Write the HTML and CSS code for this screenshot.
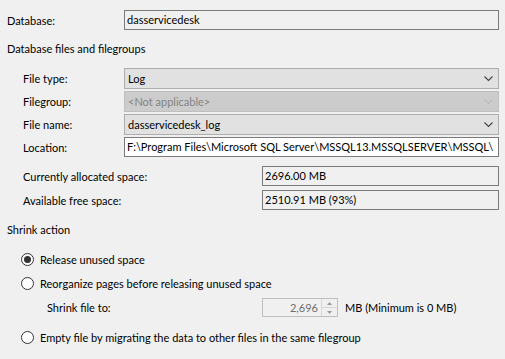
FILE: index.html
```html
<!DOCTYPE html>
<html lang="en">
<head>
    <meta charset="UTF-8">
    <title>Shrink File</title>
    <link rel="stylesheet" href="styles.css">
</head>
<body>
    <div class="page">
        <div class="row row-db">
            <span class="label">Database:</span>
            <div class="textbox readonly">dasservicedesk</div>
        </div>

        <div class="heading heading-files">Database files and filegroups</div>

        <div class="indent">
            <div class="row row-combo">
                <span class="label">File type:</span>
                <div class="combo">
                    <span class="combo-text">Log</span>
                    <svg class="chev" width="9" height="6" viewBox="0 0 9 6"><polyline points="0.5,0.5 4.5,4.5 8.5,0.5" fill="none" stroke="#444" stroke-width="1.1"/></svg>
                </div>
            </div>
            <div class="row row-combo">
                <span class="label">Filegroup:</span>
                <div class="combo disabled">
                    <span class="combo-text">&lt;Not applicable&gt;</span>
                    <svg class="chev" width="9" height="6" viewBox="0 0 9 6"><polyline points="0.5,0.5 4.5,4.5 8.5,0.5" fill="none" stroke="#bdbdbd" stroke-width="1.1"/></svg>
                </div>
            </div>
            <div class="row row-combo">
                <span class="label">File name:</span>
                <div class="combo">
                    <span class="combo-text">dasservicedesk_log</span>
                    <svg class="chev" width="9" height="6" viewBox="0 0 9 6"><polyline points="0.5,0.5 4.5,4.5 8.5,0.5" fill="none" stroke="#444" stroke-width="1.1"/></svg>
                </div>
            </div>
            <div class="row row-loc">
                <span class="label">Location:</span>
                <div class="textbox white">F:\Program Files\Microsoft SQL Server\MSSQL13.MSSQLSERVER\MSSQL\</div>
            </div>

            <div class="row row-space first">
                <span class="label label-wide">Currently allocated space:</span>
                <div class="textbox readonly">2696.00 MB</div>
            </div>
            <div class="row row-space">
                <span class="label label-wide">Available free space:</span>
                <div class="textbox readonly">2510.91 MB (93%)</div>
            </div>
        </div>

        <div class="heading heading-shrink">Shrink action</div>

        <div class="options">
            <label class="radio-row first">
                <span class="radio checked"></span>
                <span>Release unused space</span>
            </label>
            <label class="radio-row">
                <span class="radio"></span>
                <span>Reorganize pages before releasing unused space</span>
            </label>
            <div class="shrink-row">
                <span class="shrink-label">Shrink file to:</span>
                <div class="spin">
                    <span class="spin-value">2,696</span>
                    <div class="spin-buttons">
                        <div class="spin-btn"><svg width="5" height="3" viewBox="0 0 5 3"><polygon points="0,3 2.5,0 5,3" fill="#9a9a9a"/></svg></div>
                        <div class="spin-btn"><svg width="5" height="3" viewBox="0 0 5 3"><polygon points="0,0 2.5,3 5,0" fill="#9a9a9a"/></svg></div>
                    </div>
                </div>
                <span class="spin-unit">MB (Minimum is 0 MB)</span>
            </div>
            <label class="radio-row last">
                <span class="radio"></span>
                <span>Empty file by migrating the data to other files in the same filegroup</span>
            </label>
        </div>
    </div>
</body>
</html>
```

FILE: styles.css
```css
body {
    margin: 0;
    background: #f0f0f0;
    color: #000000;
    font-family: Lato, "Liberation Sans", sans-serif;
    font-size: 11px;
}
.page {
    width: 505px;
    height: 359px;
    padding: 10px 6px 0 7px;
    box-sizing: border-box;
    overflow: hidden;
}
.row {
    display: flex;
    align-items: center;
}
.label {
    width: 117px;
    flex: none;
}
.indent .label {
    width: 101px;
}
.indent .label-wide {
    width: 239px;
}
.indent {
    padding-left: 16px;
}
.textbox {
    flex: 1;
    min-width: 0;
    height: 20px;
    line-height: 18px;
    box-sizing: border-box;
    border: 1px solid #7a7a7a;
    padding: 0 2px;
    white-space: nowrap;
    overflow: hidden;
}
.textbox.readonly { background: #f0f0f0; }
.textbox.white { background: #ffffff; }
.heading-files {
    margin-top: 12px;
    line-height: 14px;
}
.row-combo {
    margin-top: 2px;
}
.row-combo:first-child {
    margin-top: 12px;
}
.combo {
    flex: 1;
    height: 21px;
    box-sizing: border-box;
    background: #e1e1e1;
    border: 1px solid #adadad;
    display: flex;
    align-items: center;
    padding: 0 4px 0 3px;
}
.combo-text {
    flex: 1;
    white-space: nowrap;
}
.combo.disabled {
    background: #cccccc;
    border-color: #bfbfbf;
    color: #838383;
}
.chev {
    display: block;
    margin-right: 1px;
}
.row-loc {
    margin-top: 2px;
}
.row-space {
    margin-top: 4px;
}
.row-space.first {
    margin-top: 9px;
}
.heading-shrink {
    margin-top: 13px;
    line-height: 14px;
}
.options {
    padding-left: 14px;
}
.radio-row {
    display: flex;
    align-items: center;
    gap: 6px;
    height: 16px;
    margin-top: 8px;
}
.radio-row.first {
    margin-top: 14px;
}
.radio-row.last {
    margin-top: 12px;
}
.radio {
    width: 13px;
    height: 13px;
    box-sizing: border-box;
    border: 1px solid #333333;
    border-radius: 50%;
    background: #ffffff;
    display: flex;
    align-items: center;
    justify-content: center;
}
.radio.checked::after {
    content: "";
    width: 7px;
    height: 7px;
    border-radius: 50%;
    background: #333333;
}
.shrink-row {
    display: flex;
    align-items: center;
    margin-top: 7px;
    padding-left: 26px;
}
.shrink-label {
    width: 215px;
}
.spin {
    width: 76px;
    height: 19px;
    box-sizing: border-box;
    border: 1px solid #bfbfbf;
    display: flex;
    background: #f0f0f0;
}
.spin-value {
    flex: 1;
    text-align: right;
    color: #6d6d6d;
    line-height: 17px;
    padding-right: 3px;
}
.spin-buttons {
    width: 15px;
    display: flex;
    flex-direction: column;
    border-left: 1px solid #d9d9d9;
}
.spin-btn {
    flex: 1;
    display: flex;
    align-items: center;
    justify-content: center;
}
.spin-btn + .spin-btn {
    border-top: 1px solid #d9d9d9;
}
.spin-btn svg {
    display: block;
}
.spin-unit {
    margin-left: 7px;
}
```
